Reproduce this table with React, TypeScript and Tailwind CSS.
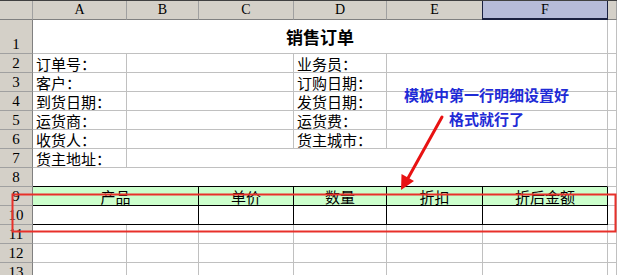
import React from "react";

const cjk = { fontFamily: '"Noto Sans CJK SC", "Noto Sans", sans-serif' };
const serif = { fontFamily: '"Liberation Serif", "DejaVu Serif", serif' };

// grid cell with the light spreadsheet gridlines
const cell = "border-r border-b border-[#c0c0c0] bg-white";
const rowHead =
  "bg-[#d4d0c8] border-r border-b border-r-[#808080] border-b-[#a0a0a0] flex items-end justify-center text-[15px] leading-[17px] text-black";
const colHead =
  "bg-[#d4d0c8] border-r border-b border-r-[#a0a0a0] border-b-[#808080] flex items-center justify-center text-[14px] leading-[16px] text-black";
const label = "flex items-end pl-[3px] text-[15px] leading-[17px] text-black whitespace-nowrap";

const infoRows: [string, string][] = [
  ["订单号：", "业务员："],
  ["客户：", "订购日期："],
  ["到货日期：", "发货日期："],
  ["运货商：", "运货费："],
  ["收货人：", "货主城市："],
];

const tableHeads = [
  { text: "产品", span: "col-span-2" },
  { text: "单价", span: "" },
  { text: "数量", span: "" },
  { text: "折扣", span: "" },
  { text: "折后金额", span: "" },
];

export default function App() {
  return (
    <div className="relative w-[617px] h-[275px] overflow-hidden bg-white" style={cjk}>
      <div className="border-t border-[#404040] grid grid-cols-[33px_94px_72px_95px_93px_96px_125px_1fr] grid-rows-[19px_34px_repeat(12,19px)]">
        {/* column header strip */}
        <div className={colHead} />
        {["A", "B", "C", "D", "E"].map((c) => (
          <div key={c} className={colHead} style={serif}>
            {c}
          </div>
        ))}
        <div
          className="bg-[#b6bbd9] border-l border-r border-b-2 border-l-[#1a2040] border-r-[#1a2040] border-b-[#1a2040] -ml-px flex items-center justify-center text-[14px] leading-[16px] text-black"
          style={serif}
        >
          F
        </div>
        <div className={colHead} />

        {/* row 1: title */}
        <div className={rowHead} style={serif}>1</div>
        <div className={`${cell} col-span-6 flex items-end justify-center pb-[6px]`}>
          <span className="text-[17px] leading-[20px] font-bold text-black">销售订单</span>
        </div>
        <div className={cell} />

        {/* rows 2-6: header fields */}
        {infoRows.map(([a, d], i) => (
          <React.Fragment key={a}>
            <div className={rowHead} style={serif}>{i + 2}</div>
            <div className={`${cell} ${label}`}>{a}</div>
            <div className={`${cell} col-span-2`} />
            <div className={`${cell} ${label}`}>{d}</div>
            <div className={`${cell} col-span-2`} />
            <div className={cell} />
          </React.Fragment>
        ))}

        {/* row 7 */}
        <div className={rowHead} style={serif}>7</div>
        <div className={`${cell} ${label}`}>货主地址：</div>
        <div className={`${cell} col-span-5`} />
        <div className={cell} />

        {/* row 8 */}
        <div className={rowHead} style={serif}>8</div>
        <div className="col-span-6 border-r border-r-[#c0c0c0] border-b border-b-black bg-white" />
        <div className={cell} />

        {/* row 9: detail table header */}
        <div className={rowHead} style={serif}>9</div>
        {tableHeads.map((h) => (
          <div
            key={h.text}
            className={`${h.span} bg-[#ccffcc] border-r border-b border-black flex items-end justify-center text-[15px] leading-[17px] text-black`}
          >
            {h.text}
          </div>
        ))}
        <div className={cell} />

        {/* row 10: detail line */}
        <div className={rowHead} style={serif}>10</div>
        <div className="col-span-2 bg-white border-r border-b border-black" />
        <div className="bg-white border-r border-b border-black" />
        <div className="bg-white border-r border-b border-black" />
        <div className="bg-white border-r border-b border-black" />
        <div className="bg-white border-r border-b border-black" />
        <div className={cell} />

        {/* rows 11-13: empty */}
        {[11, 12, 13].map((n) => (
          <React.Fragment key={n}>
            <div className={rowHead} style={serif}>{n}</div>
            <div className={cell} />
            <div className={cell} />
            <div className={cell} />
            <div className={cell} />
            <div className={cell} />
            <div className={cell} />
            <div className={cell} />
          </React.Fragment>
        ))}
      </div>

      {/* note + markup drawn over the sheet */}
      <div className="absolute left-[404px] top-[86px] text-[15px] leading-[18px] font-bold text-[#1f2bd6] whitespace-nowrap">
        模板中第一行明细设置好
      </div>
      <div className="absolute left-[449px] top-[110px] text-[15px] leading-[18px] font-bold text-[#1f2bd6] whitespace-nowrap">
        格式就行了
      </div>
      <svg className="absolute left-0 top-0" width="617" height="275" viewBox="0 0 617 275">
        <line x1="442" y1="117" x2="407" y2="180" stroke="#e81212" strokeWidth="3" strokeLinecap="round" />
        <polygon points="401,190 401.5,174 414,181" fill="#e81212" />
        <rect x="12.5" y="194.5" width="603" height="37" fill="none" stroke="#e8302a" strokeWidth="2" />
      </svg>
    </div>
  );
}
